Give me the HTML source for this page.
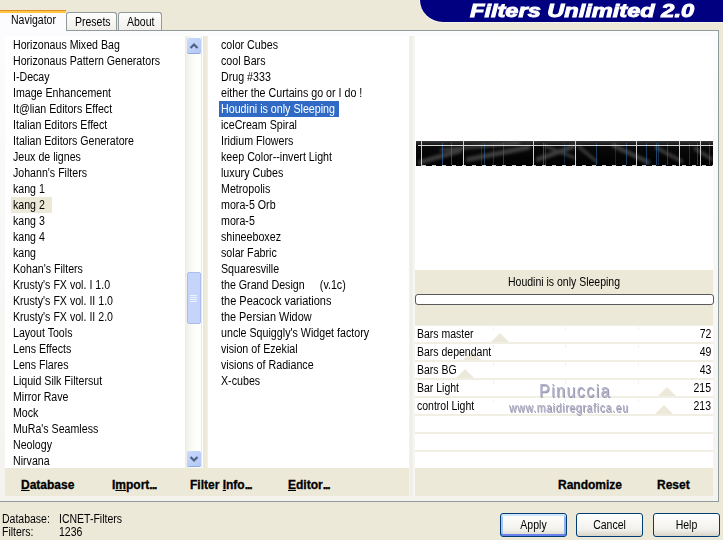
<!DOCTYPE html>
<html><head><meta charset="utf-8">
<style>
*{margin:0;padding:0;box-sizing:border-box}
html,body{width:723px;height:540px;overflow:hidden;background:#ECE9D8;font-family:"Liberation Sans",sans-serif;font-size:12px;color:#000;position:relative}
.a{position:absolute}
.t{position:absolute;white-space:nowrap;font-size:12px;line-height:16px;transform-origin:0 0;transform:scaleX(0.875)}
.r{position:absolute;white-space:nowrap;font-size:12px;line-height:16px;text-align:right;transform-origin:100% 0;transform:scaleX(0.875)}
.m .t{transform:scaleX(0.89)}
.l .t{transform:scaleX(0.885)}
.c{position:absolute;white-space:nowrap;font-size:12px;text-align:center;transform:scaleX(0.875)}
#banner{left:420px;top:0;width:303px;height:22px;background:#000080;border-bottom-left-radius:23px 22px;box-shadow:0 0 0 1px #F6F4E6}
#title{left:470px;top:0px;height:22px;line-height:22px;font-size:18px;font-weight:bold;font-style:italic;color:#fff;white-space:nowrap;transform-origin:0 0;transform:scaleX(1.31);-webkit-text-stroke:0.9px #fff}
.tab{border:1px solid #919B9C;border-bottom:none;border-radius:3px 3px 0 0;background:linear-gradient(#FEFEFE,#F0EFEA)}
.bold{position:absolute;font-weight:bold;font-size:12px;line-height:15px;white-space:nowrap;-webkit-text-stroke:0.3px #000}
.u{text-decoration:underline}
.btn{position:absolute;border:1px solid #003C74;border-radius:3px;background:linear-gradient(#FFFFFF,#F2F1EC 70%,#D8D5C8)}
.row{position:absolute;left:415px;width:298px;height:16px;background:#fff}
.thumb{position:absolute;width:0;height:0;border-left:9px solid transparent;border-right:9px solid transparent;border-bottom:9px solid #EDE9DA}
.tick{position:absolute;top:1px;width:1px;height:3px;background:#F0F0F0}
</style></head><body>
<div id="banner" class="a"></div>
<div id="title" class="a">Filters Unlimited 2.0</div>

<!-- frame -->
<div class="a" style="left:-1px;top:30px;width:720px;height:472px;border:1px solid #919B9C;background:linear-gradient(#FCFCFE,#F4F3EE)"></div>
<div class="a tab" style="left:66px;top:12px;width:51px;height:18px"></div>
<div class="t" style="left:75px;top:14px">Presets</div>
<div class="a tab" style="left:118px;top:12px;width:44px;height:18px"></div>
<div class="t" style="left:127px;top:14px">About</div>
<div class="a" style="left:0;top:10px;width:66px;height:22px;background:#FCFCFE;border-top:3px solid #FFC83C"></div>
<div class="a" style="left:0;top:10px;width:66px;height:1px;background:#E68B2C"></div>
<div class="t" style="left:11px;top:12px">Navigator</div>

<!-- lists -->
<div class="a" style="left:5px;top:36px;width:197px;height:432px;background:#fff"></div>
<div class="a" style="left:203px;top:36px;width:5px;height:432px;background:linear-gradient(90deg,#EAE7D8,#EDEADB 60%,#F3F1E6)"></div>
<div class="a" style="left:208px;top:36px;width:201px;height:432px;background:#fff"></div>
<div class="a" style="left:409px;top:36px;width:6px;height:460px;background:linear-gradient(90deg,#F4F3EE,#EDECE4 40%,#F3F2EC 60%,#F8F7F3)"></div>

<div class="a" style="left:11px;top:197px;width:41px;height:16px;background:#ECE9D8"></div>
<div class="a" style="left:219px;top:101px;width:120px;height:16px;background:#316AC5"></div>

<div class="a l" style="left:13px;top:37px">
<div class="t" style="top:0">Horizonaus Mixed Bag</div>
<div class="t" style="top:16px">Horizonaus Pattern Generators</div>
<div class="t" style="top:32px">I-Decay</div>
<div class="t" style="top:48px">Image Enhancement</div>
<div class="t" style="top:64px">It@lian Editors Effect</div>
<div class="t" style="top:80px">Italian Editors Effect</div>
<div class="t" style="top:96px">Italian Editors Generatore</div>
<div class="t" style="top:112px">Jeux de lignes</div>
<div class="t" style="top:128px">Johann's Filters</div>
<div class="t" style="top:144px">kang 1</div>
<div class="t" style="top:160px">kang 2</div>
<div class="t" style="top:176px">kang 3</div>
<div class="t" style="top:192px">kang 4</div>
<div class="t" style="top:208px">kang</div>
<div class="t" style="top:224px">Kohan's Filters</div>
<div class="t" style="top:240px">Krusty's FX vol. I 1.0</div>
<div class="t" style="top:256px">Krusty's FX vol. II 1.0</div>
<div class="t" style="top:272px">Krusty's FX vol. II 2.0</div>
<div class="t" style="top:288px">Layout Tools</div>
<div class="t" style="top:304px">Lens Effects</div>
<div class="t" style="top:320px">Lens Flares</div>
<div class="t" style="top:336px">Liquid Silk Filtersut</div>
<div class="t" style="top:352px">Mirror Rave</div>
<div class="t" style="top:368px">Mock</div>
<div class="t" style="top:384px">MuRa's Seamless</div>
<div class="t" style="top:400px">Neology</div>
<div class="t" style="top:416px">Nirvana</div>
</div>

<!-- scrollbar -->
<div class="a" style="left:185px;top:36px;width:18px;height:432px;background:linear-gradient(90deg,#ECEBE3,#F6F5F0 4px,#FEFEFB 10px,#FEFEFB 16px,#E6E6E2 16px,#E6E6E2 17px,#fff 17px)"></div>
<div class="a" style="left:187px;top:38px;width:14px;height:16px;background:linear-gradient(135deg,#CADAFC,#B4C8F6);border-radius:2px;border-bottom:1px solid #8FA8E0"></div>
<svg class="a" style="left:187px;top:38px" width="14" height="16"><path d="M3.5 10 L7 6.5 L10.5 10" stroke="#4D6185" stroke-width="2.2" fill="none"/></svg>
<div class="a" style="left:187px;top:272px;width:14px;height:52px;background:#C4D4FA;border:1px solid #A9BDF0;border-radius:2px"></div>
<div class="a" style="left:190px;top:295px;width:7px;height:8px;background:repeating-linear-gradient(#EEF4FE 0 1px,transparent 1px 2px)"></div>
<div class="a" style="left:187px;top:451px;width:14px;height:16px;background:linear-gradient(135deg,#CADAFC,#B4C8F6);border-radius:2px;border-bottom:1px solid #8FA8E0"></div>
<svg class="a" style="left:187px;top:451px" width="14" height="16"><path d="M3.5 6 L7 9.5 L10.5 6" stroke="#4D6185" stroke-width="2.2" fill="none"/></svg>

<div class="a m" style="left:221px;top:37px">
<div class="t" style="top:0">color Cubes</div>
<div class="t" style="top:16px">cool Bars</div>
<div class="t" style="top:32px">Drug #333</div>
<div class="t" style="top:48px">either the Curtains go or I do !</div>
<div class="t" style="top:64px;color:#fff">Houdini is only Sleeping</div>
<div class="t" style="top:80px">iceCream Spiral</div>
<div class="t" style="top:96px">Iridium Flowers</div>
<div class="t" style="top:112px">keep Color--invert Light</div>
<div class="t" style="top:128px">luxury Cubes</div>
<div class="t" style="top:144px">Metropolis</div>
<div class="t" style="top:160px">mora-5 Orb</div>
<div class="t" style="top:176px">mora-5</div>
<div class="t" style="top:192px">shineeboxez</div>
<div class="t" style="top:208px">solar Fabric</div>
<div class="t" style="top:224px">Squaresville</div>
<div class="t" style="top:240px">the Grand Design<span style="padding-left:17px">(v.1c)</span></div>
<div class="t" style="top:256px;transform:scaleX(0.915)">the Peacock variations</div>
<div class="t" style="top:272px;transform:scaleX(0.905)">the Persian Widow</div>
<div class="t" style="top:288px">uncle Squiggly's Widget factory</div>
<div class="t" style="top:304px">vision of Ezekial</div>
<div class="t" style="top:320px">visions of Radiance</div>
<div class="t" style="top:336px">X-cubes</div>
</div>

<!-- right panel -->
<div class="a" style="left:415px;top:36px;width:298px;height:234px;background:#fff"></div>
<svg class="a" style="left:416px;top:140px" width="297" height="26">
<defs><filter id="bl" x="-20%" y="-50%" width="140%" height="200%"><feGaussianBlur stdDeviation="1.6"/></filter>
<linearGradient id="g1" x1="0" y1="0" x2="0" y2="1"><stop offset="0" stop-color="#3a3a3a"/><stop offset="0.2" stop-color="#0a0a0a"/><stop offset="1" stop-color="#000"/></linearGradient></defs>
<rect x="0" y="1" width="297" height="25" fill="url(#g1)"/>
<g filter="url(#bl)" fill="#8a8a8a" opacity="0.42">
<polygon points="2,20.5 46,7.5 46,12.5 2,25.5"/>
<polygon points="50,17.5 114,4.5 114,9.5 50,22.5"/>
<polygon points="120,17.5 159,3.5 159,8.5 120,22.5"/>
<polygon points="24,8.5 104,1.5 104,4.5 24,11.5"/>
<polygon points="162,4.0 181,20.0 181,24.0 162,8.0"/>
<polygon points="196,2.5 234,20.5 234,25.5 196,7.5"/>
<polygon points="239,5.0 267,20.0 267,24.0 239,9.0"/>
<polygon points="278,6.0 297,18.0 297,22.0 278,10.0"/>
<polygon points="129,4.5 159,16.5 159,19.5 129,7.5"/>
</g>
<rect x="5" y="1" width="1" height="25" fill="#D0D0D0"/>
<rect x="47" y="1" width="1" height="25" fill="#D0D0D0"/>
<rect x="117" y="1" width="1" height="25" fill="#D0D0D0"/>
<rect x="159" y="1" width="1" height="25" fill="#D0D0D0"/>
<rect x="220" y="1" width="1" height="25" fill="#D0D0D0"/>
<rect x="263" y="1" width="1" height="25" fill="#D0D0D0"/>
<rect x="284" y="1" width="1" height="25" fill="#D0D0D0"/>
<g fill="#2E68A8">
<rect x="26" y="3" width="1" height="22" opacity="0.70"/>
<rect x="35" y="3" width="1" height="22" opacity="0.70"/>
<rect x="65" y="3" width="1" height="22" opacity="0.42"/>
<rect x="68" y="3" width="1" height="22" opacity="0.56"/>
<rect x="77" y="3" width="1" height="22" opacity="0.42"/>
<rect x="87" y="3" width="1" height="22" opacity="0.56"/>
<rect x="127" y="3" width="1" height="22" opacity="0.70"/>
<rect x="129" y="3" width="1" height="22" opacity="0.49"/>
<rect x="148" y="3" width="1" height="22" opacity="0.35"/>
<rect x="180" y="3" width="1" height="22" opacity="0.56"/>
<rect x="199" y="3" width="1" height="22" opacity="0.35"/>
<rect x="210" y="3" width="1" height="22" opacity="0.56"/>
<rect x="230" y="3" width="1" height="22" opacity="0.56"/>
<rect x="240" y="3" width="1" height="22" opacity="0.63"/>
<rect x="242" y="3" width="1" height="22" opacity="0.42"/>
<rect x="251" y="3" width="1" height="22" opacity="0.56"/>
<rect x="273" y="3" width="1" height="22" opacity="0.49"/>
<rect x="281" y="3" width="1" height="22" opacity="0.56"/>
<rect x="293" y="3" width="1" height="22" opacity="0.56"/>
</g>
<rect x="2" y="5" width="295" height="1" fill="#D8D8D8"/>
<g fill="#fff" opacity="0.8">
<rect x="6" y="25" width="4" height="1"/>
<rect x="16" y="25" width="4" height="1"/>
<rect x="26" y="25" width="4" height="1"/>
<rect x="36" y="25" width="4" height="1"/>
<rect x="46" y="25" width="4" height="1"/>
<rect x="56" y="25" width="4" height="1"/>
<rect x="66" y="25" width="4" height="1"/>
<rect x="76" y="25" width="4" height="1"/>
<rect x="86" y="25" width="4" height="1"/>
<rect x="96" y="25" width="4" height="1"/>
<rect x="106" y="25" width="4" height="1"/>
<rect x="116" y="25" width="4" height="1"/>
<rect x="126" y="25" width="4" height="1"/>
<rect x="136" y="25" width="4" height="1"/>
<rect x="146" y="25" width="4" height="1"/>
<rect x="156" y="25" width="4" height="1"/>
<rect x="166" y="25" width="4" height="1"/>
<rect x="176" y="25" width="4" height="1"/>
<rect x="186" y="25" width="4" height="1"/>
<rect x="196" y="25" width="4" height="1"/>
<rect x="206" y="25" width="4" height="1"/>
<rect x="216" y="25" width="4" height="1"/>
<rect x="226" y="25" width="4" height="1"/>
<rect x="236" y="25" width="4" height="1"/>
<rect x="246" y="25" width="4" height="1"/>
<rect x="256" y="25" width="4" height="1"/>
<rect x="266" y="25" width="4" height="1"/>
<rect x="276" y="25" width="4" height="1"/>
<rect x="286" y="25" width="4" height="1"/>
<rect x="296" y="25" width="4" height="1"/>
</g>
</svg>
<div class="a" style="left:415px;top:270px;width:298px;height:55px;background:#ECE9D8"></div>
<div class="c" style="left:415px;top:274px;width:298px;line-height:16px">Houdini is only Sleeping</div>
<div class="a" style="left:415px;top:294px;width:299px;height:11px;background:#fff;border:1px solid #5A5A5A;border-radius:3px"></div>
<div class="a" style="left:415px;top:325px;width:298px;height:143px;background:#F1EEE3"></div>

<div class="row" style="top:326px"><div class="tick" style="left:78px"></div><div class="tick" style="left:150px"></div><div class="tick" style="left:223px"></div><div class="thumb" style="left:76px;top:7px"></div><div class="t" style="left:2px;top:0">Bars master</div><div class="r" style="right:2px;top:0">72</div></div>
<div class="row" style="top:344px"><div class="tick" style="left:78px"></div><div class="tick" style="left:150px"></div><div class="tick" style="left:223px"></div><div class="thumb" style="left:48px;top:7px"></div><div class="t" style="left:2px;top:0">Bars dependant</div><div class="r" style="right:2px;top:0">49</div></div>
<div class="row" style="top:362px"><div class="tick" style="left:78px"></div><div class="tick" style="left:150px"></div><div class="tick" style="left:223px"></div><div class="thumb" style="left:41px;top:7px"></div><div class="t" style="left:2px;top:0">Bars BG</div><div class="r" style="right:2px;top:0">43</div></div>
<div class="row" style="top:380px"><div class="tick" style="left:78px"></div><div class="tick" style="left:150px"></div><div class="tick" style="left:223px"></div><div class="thumb" style="left:243px;top:7px"></div><div class="t" style="left:2px;top:0">Bar Light</div><div class="r" style="right:2px;top:0">215</div></div>
<div class="row" style="top:398px"><div class="tick" style="left:78px"></div><div class="tick" style="left:150px"></div><div class="tick" style="left:223px"></div><div class="thumb" style="left:240px;top:7px"></div><div class="t" style="left:2px;top:0">control Light</div><div class="r" style="right:2px;top:0">213</div></div>
<div class="row" style="top:416px"></div>
<div class="row" style="top:434px"></div>
<div class="row" style="top:452px"></div>

<!-- watermark -->
<div class="a" style="left:539px;top:381px;font-size:19px;line-height:20px;color:#B0B0CC;text-shadow:1px 1px 0 #9696AC;white-space:nowrap;letter-spacing:1.6px;transform-origin:0 0;transform:scaleX(0.85)">Pinuccia</div>
<div class="a" style="left:509px;top:401px;font-size:13px;line-height:14px;color:#ABABC4;text-shadow:1px 1px 0 #9A9AAE;white-space:nowrap;letter-spacing:0.9px;transform-origin:0 0;transform:scaleX(0.8)">www.maidiregrafica.eu</div>

<!-- bottom bars -->
<div class="a" style="left:5px;top:468px;width:404px;height:28px;background:#ECE9D8"></div>
<div class="a" style="left:415px;top:468px;width:298px;height:28px;background:#ECE9D8"></div>
<div class="bold" style="left:21px;top:478px"><span class="u">D</span>atabase</div>
<div class="bold" style="left:112px;top:478px">I<span class="u">m</span>port<span style="letter-spacing:-1px">...</span></div>
<div class="bold" style="left:190px;top:478px">Filter <span class="u">I</span>nfo<span style="letter-spacing:-1px">...</span></div>
<div class="bold" style="left:288px;top:478px"><span class="u">E</span>ditor<span style="letter-spacing:-1px">...</span></div>
<div class="bold" style="left:558px;top:478px">Randomize</div>
<div class="bold" style="left:657px;top:478px">Reset</div>

<!-- status -->
<div class="t" style="left:2px;top:511px">Database:</div>
<div class="t" style="left:59px;top:511px">ICNET-Filters</div>
<div class="t" style="left:2px;top:524px">Filters:</div>
<div class="t" style="left:59px;top:524px">1236</div>

<div class="btn" style="left:500px;top:513px;width:67px;height:24px;box-shadow:inset 0 2px 0 0 #CEE7FF,inset 0 -2px 0 0 #6982EE,inset 2px 0 0 0 #A8C4F4,inset -2px 0 0 0 #8FB0EC"></div>
<div class="c" style="left:500px;top:517px;width:67px;line-height:16px">Apply</div>
<div class="btn" style="left:576px;top:513px;width:67px;height:24px"></div>
<div class="c" style="left:576px;top:517px;width:67px;line-height:16px">Cancel</div>
<div class="btn" style="left:653px;top:513px;width:67px;height:24px"></div>
<div class="c" style="left:653px;top:517px;width:67px;line-height:16px">Help</div>
</body></html>
